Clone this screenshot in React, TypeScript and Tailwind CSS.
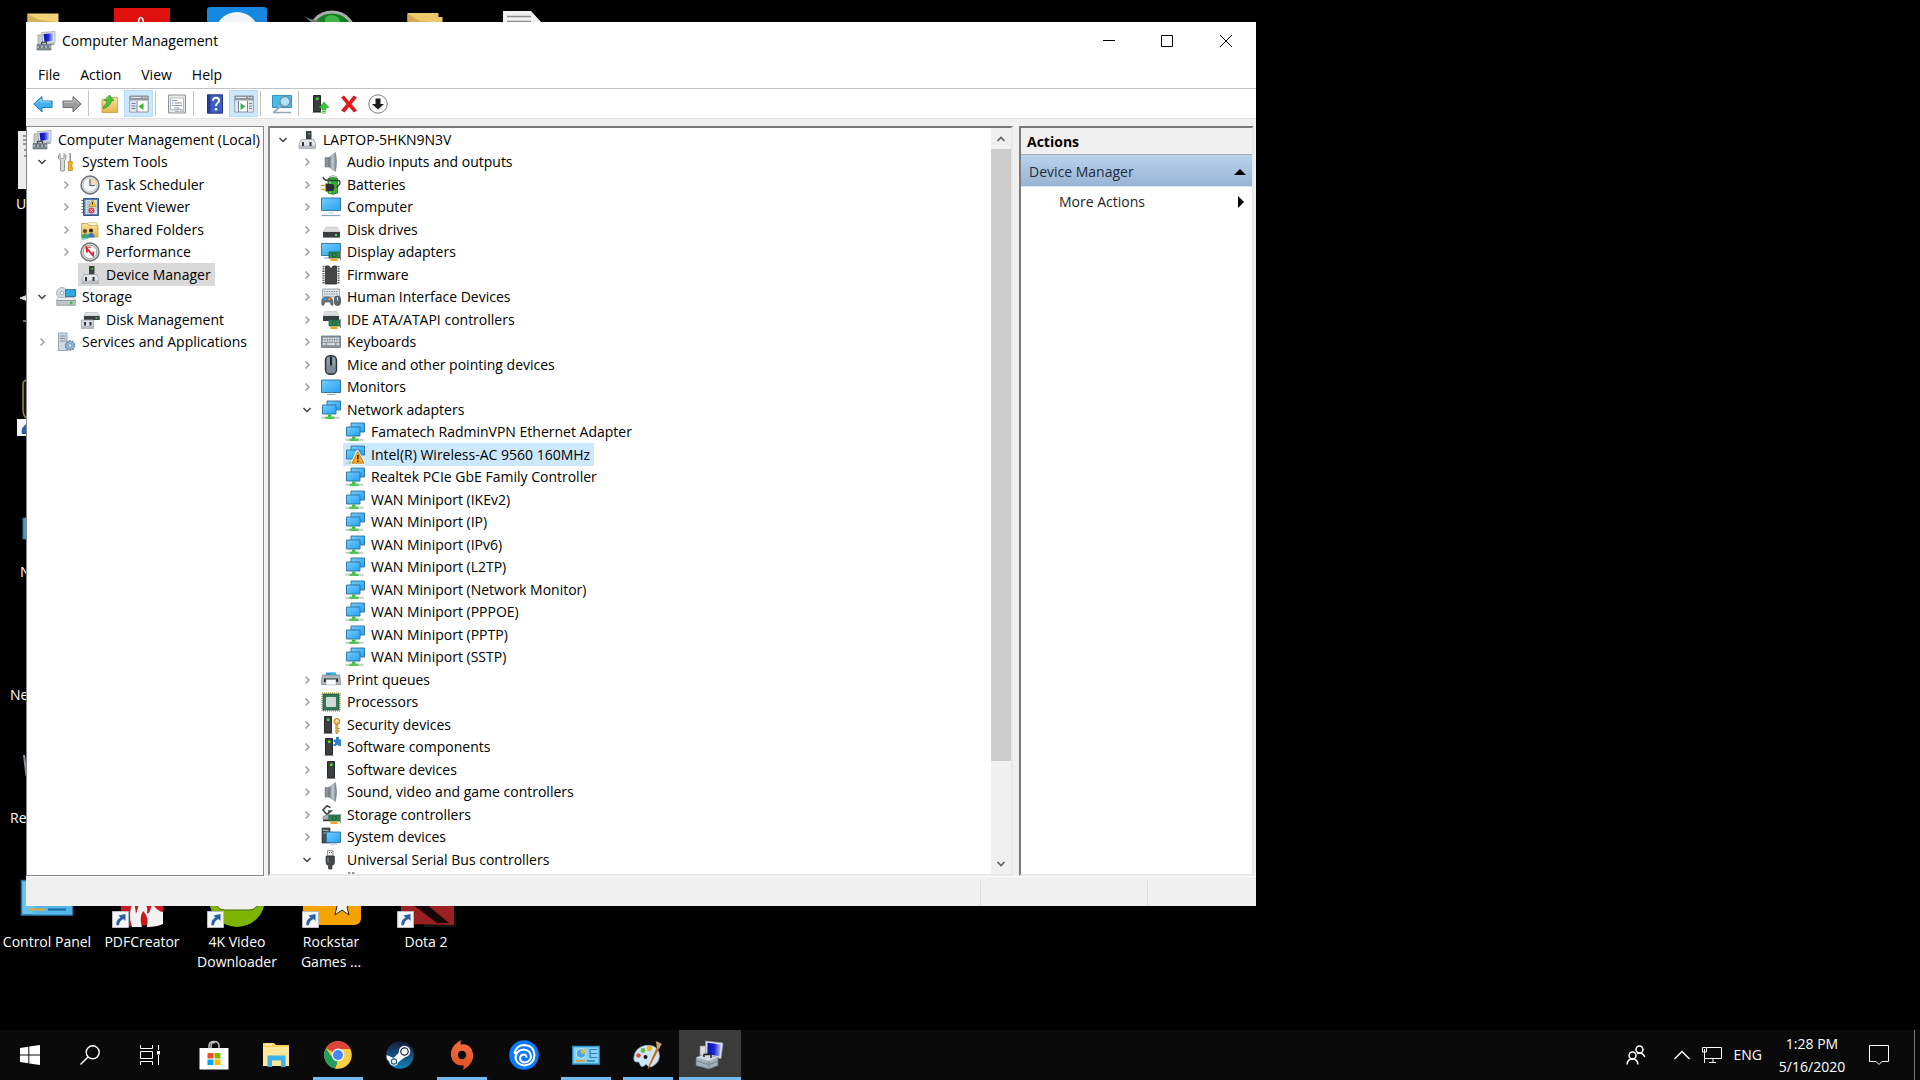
import React from 'react';
import clsx from 'clsx';

/* ---------- shared svg parts ---------- */

const Svg: React.FC<{ size?: string; box?: string; children: React.ReactNode }> = ({
  size = 'w-5 h-5',
  box = '0 0 20 20',
  children
}) => (
  <svg viewBox={box} className={clsx('shrink-0', size)} aria-hidden="true">
    {children}
  </svg>
);

const Gradients: React.FC = () => (
  <svg className="absolute w-0 h-0" aria-hidden="true">
    <defs>
      <linearGradient id="screen" x1="0" y1="0" x2="1" y2="1">
        <stop offset="0" stopColor="#74cdfb" />
        <stop offset="1" stopColor="#27a0f2" />
      </linearGradient>
      <linearGradient id="cone" x1="0" y1="0" x2="1" y2="0">
        <stop offset="0" stopColor="#6d7780" />
        <stop offset="0.5" stopColor="#c5cbd0" />
        <stop offset="1" stopColor="#747d85" />
      </linearGradient>
      <linearGradient id="folder" x1="0" y1="0" x2="0" y2="1">
        <stop offset="0" stopColor="#f9e29a" />
        <stop offset="1" stopColor="#e3b64c" />
      </linearGradient>
      <linearGradient id="navy" x1="0" y1="0" x2="1" y2="0">
        <stop offset="0" stopColor="#0a12a8" />
        <stop offset="0.5" stopColor="#1a24d8" />
        <stop offset="1" stopColor="#b9c8ff" />
      </linearGradient>
      <linearGradient id="steam" x1="0" y1="0" x2="0" y2="1">
        <stop offset="0" stopColor="#171a3c" />
        <stop offset="1" stopColor="#1383b8" />
      </linearGradient>
      <linearGradient id="origin" x1="0" y1="0" x2="0" y2="1">
        <stop offset="0" stopColor="#f3703f" />
        <stop offset="1" stopColor="#dd4f22" />
      </linearGradient>
    </defs>
  </svg>
);

const Card = () => (
  <g>
    <path d="M8 10h11v6H8z" fill="#2b8a52" stroke="#1c5b38" strokeWidth="0.8" />
    <path d="M19.5 9v9" stroke="#8a9096" />
    <path d="M11 11.5h4.5v3H11z" fill="#174b2e" />
    <path d="M12 12.5h2.5v1H12z" fill="#6fd08e" />
    <path d="M9.5 16.5h7V19h-7z" fill="#f2a71c" />
  </g>
);

const Tower: React.FC<{ x?: number }> = ({ x = 0 }) => (
  <g transform={`translate(${x} 0)`}>
    <path d="M3.500 1.500h7v16h-7z" fill="#3c3f42" stroke="#26282a" />
    <path d="M2.500 18.500h9" stroke="#8b8e91" />
    <rect x="6" y="3.500" width="2.500" height="2.500" fill="#3fe03f" />
  </g>
);

/* ---------- tree icons ---------- */

const ComputerManagementIcon: React.FC<{ size?: string }> = ({ size }) => (
  <Svg size={size}>
    <path d="M2 4h5v11H2z" fill="#c8ccd0" stroke="#8b9096" strokeWidth="0.700" />
    <path d="M5.500 1.500 19 .5v11l-12 1.500z" fill="#dfe2e6" stroke="#9a9fa6" strokeWidth="0.700" />
    <path d="m7.500 3 9.500-.8v7.600L8.500 11z" fill="url(#navy)" />
    <path d="M14 12h4l1 2h-5z" fill="#aab0b5" />
    <path d="M1 13.500h14V19H1z" fill="#7f8b93" stroke="#59646b" strokeWidth="0.600" />
    <path d="M5.500 13.300v-2h5v2" fill="none" stroke="#2f3538" />
    <path d="M1 16h14" stroke="#d7dcdf" />
    <path d="M4 15v2m4-2v2m4-2v2" stroke="#30373b" />
  </Svg>
);

const DeviceManagerIcon = () => (
  <Svg>
    <path d="M9 1h5.500v9H9z" fill="#3f4245" />
    <rect x="11.500" y="3" width="1.500" height="1.500" fill="#44df44" />
    <path d="M4 9.500h13L18.500 14v4.500H2V14z" fill="#e4e5ea" stroke="#a2a4ad" strokeWidth="0.800" />
    <path d="M2 15.500h16.500v3H2z" fill="#b9bbc4" />
    <path d="M5 12h2v4H5zm7.500 0h2v4h-2z" fill="#303236" />
  </Svg>
);

const ToolsIcon = () => (
  <Svg>
    <path
      d="M3 1.500v4l2 1.500 2-1.500v-4l2 2v3L7.500 9v9.500q-2 1.500-4 0V9L1.500 6.500v-3z"
      transform="translate(1 0)"
      fill="#d4d8db"
      stroke="#7b8287"
      strokeWidth="0.800"
    />
    <path d="M13.500 1h1.500v8h-1.500z" fill="#8d9398" />
    <path d="M12 10q2.300-2 4.500 0l-.6 3 .6 5q-2.200 1.800-4.500 0l.6-5z" fill="#f5b323" stroke="#b67b06" strokeWidth="0.700" />
  </Svg>
);

const ClockIcon = () => (
  <Svg>
    <circle cx="10" cy="10" r="9" fill="#d9dce0" stroke="#6c7075" strokeWidth="1.400" />
    <circle cx="10" cy="10" r="7" fill="#f3f6fa" stroke="#a8adb3" strokeWidth="0.600" />
    <path d="M10 10V3a7 7 0 0 1 7 7z" fill="#f7dfa8" />
    <path d="M10 4v6.500h5" fill="none" stroke="#3f6796" strokeWidth="1.200" />
  </Svg>
);

const EventIcon = () => (
  <Svg>
    <path d="M3.500 1.500h15v17h-15z" fill="#5b7fb4" stroke="#34588c" />
    <path d="M5.500 3h11.500v14H5.500z" fill="#cfdcec" />
    <path d="M7 5h3m-3 2.500h3M7 10h3m-3 2.500h2M7 15h2" stroke="#7d97ba" strokeWidth="0.800" />
    <path d="m12.500 3 3.800 6.500H8.800z" fill="#f8c81c" stroke="#a87f00" strokeWidth="0.500" />
    <path d="M12.500 5.200v2.500" stroke="#3b2f00" />
    <circle cx="11.500" cy="13.500" r="3" fill="#dd3a3f" />
    <path d="m10.300 12.300 2.400 2.400m0-2.400-2.400 2.400" stroke="#fff" strokeWidth="0.900" />
    <path d="M1.500 3.500h3m-3 3h3m-3 3h3m-3 3h3m-3 3h3" stroke="#55585c" strokeWidth="0.900" />
  </Svg>
);

const SharedIcon = () => (
  <Svg>
    <path d="M1.500 3.500h6l1 2h9.500V17h-16.500z" fill="url(#folder)" stroke="#b98f35" strokeWidth="0.700" />
    <path d="M9 2.500h8v3H9z" fill="#fff4cf" stroke="#caa552" strokeWidth="0.500" />
    <circle cx="5" cy="11" r="2" fill="#6a4326" />
    <circle cx="11" cy="10.500" r="2" fill="#2e2620" />
    <path d="M1.500 18.500q0-5 3.500-5t3.500 5z" fill="#3fa17c" />
    <path d="M7.800 17.500q0-4.500 3.400-4.500t3.300 4.500z" fill="#3a77b8" />
    <path d="M.8 19q4 1 7.500-1" stroke="#79c9a8" fill="none" />
  </Svg>
);

const PerformanceIcon = () => (
  <Svg>
    <circle cx="10" cy="10" r="9" fill="#d9dbdd" stroke="#6f7275" strokeWidth="1.400" />
    <circle cx="10" cy="10" r="6.800" fill="#fbfbfb" stroke="#8d9093" strokeWidth="0.800" />
    <path d="M7 10.500 6.500 6l6.500 7.500.5-4" fill="none" stroke="#d81f26" strokeWidth="1.800" />
    <path d="M6 5.200h5" stroke="#d81f26" />
  </Svg>
);

const StorageIcon = () => (
  <Svg>
    <circle cx="6" cy="6" r="5.500" fill="#d6dade" stroke="#989ea4" strokeWidth="0.700" />
    <circle cx="6" cy="6" r="1.700" fill="#fff" stroke="#8a9096" strokeWidth="0.700" />
    <path d="M9.500 2.500h10v7h-10z" fill="#2fa9e0" stroke="#16688f" strokeWidth="0.800" />
    <path d="M2 10.500h16l1.500 3h-19z" fill="#eceef0" stroke="#9da3a8" strokeWidth="0.600" />
    <path d="M.8 13.500h18.500v4.800H.8z" fill="#bfc5ca" stroke="#80868c" strokeWidth="0.700" />
    <path d="M14 14.500h2.500v2.800H14z" fill="#43bf3f" />
  </Svg>
);

const DiskManagementIcon = () => (
  <Svg>
    <path d="M5.500 2.500h12L19.500 6h-16z" fill="#e2e3e5" stroke="#a7a9ac" strokeWidth="0.500" />
    <path d="M4 6h15.700v4H4z" fill="#3a3d40" />
    <rect x="15.500" y="7.300" width="1.700" height="1.400" fill="#44df44" />
    <path d="M1.500 10h12v8.500h-12z" fill="#dddee4" stroke="#9d9fa8" strokeWidth="0.800" />
    <path d="M4 12h2v3.500H4zm5.500 0h2v3.500h-2z" fill="#303236" />
    <path d="M1.500 16h12v2.500h-12z" fill="#b9bbc4" />
  </Svg>
);

const ServicesIcon = () => (
  <Svg>
    <path d="M2.500 1h8.500v17.500H2.500z" fill="#cfd9e2" stroke="#8496a6" strokeWidth="0.800" />
    <path d="M4 4h5.500M4 6.500h5.500M4 9h5.500" stroke="#7b8ea0" />
    <path d="M1.500 18.500H12" stroke="#9aa7b2" />
    <circle cx="14" cy="13.500" r="4.500" fill="#8fb4d6" stroke="#5f88b0" strokeWidth="1.600" strokeDasharray="1.800 1" />
    <circle cx="14" cy="13.500" r="1.700" fill="#eef4f9" stroke="#5f88b0" strokeWidth="0.700" />
  </Svg>
);

const SpeakerIcon = () => (
  <Svg>
    <path d="M4 5.500h4v9.500H4z" fill="#8a939b" stroke="#626b72" strokeWidth="0.500" />
    <path d="M8 5.500 14.500.5q2 9.500 0 19L8 15z" fill="url(#cone)" stroke="#6d767e" strokeWidth="0.500" />
  </Svg>
);

const BatteryIcon = () => (
  <Svg>
    <path d="M8.500 1.500q3.500-2 7 0V4h-7z" fill="#dfe4e8" stroke="#8b9196" strokeWidth="0.600" />
    <path d="M7 3.500q5-2 9.500 0V18q-4.500 2.500-9.500 0z" fill="#35b233" stroke="#1c7420" strokeWidth="0.800" />
    <path d="M9 5v13" stroke="#94ee85" strokeWidth="1.300" />
    <path d="M2 2q1 3.500 5 3.500h10q3 0 1.500 4l-3 3" fill="none" stroke="#33373a" strokeWidth="1.300" />
    <path d="M4.500 8.500 12 9q3 3 0 7l-7.500.5z" fill="#2c2f32" />
    <path d="M0 10.500h4.500M0 14.500h4.500" stroke="#e0a624" strokeWidth="1.600" />
  </Svg>
);

const MonitorIcon: React.FC<{ small?: boolean }> = ({ small }) => (
  <Svg>
    <path
      d={small ? 'M.5 3h19v12.500H.5z' : 'M.5 1h19v12.500H.5z'}
      fill="url(#screen)"
      stroke="#286f9e"
      strokeWidth="0.900"
    />
    {small ? (
      <path d="M6 17.500h8" stroke="#8ba6bb" />
    ) : (
      <g>
        <path d="M7.500 15h5v1.500h-5z" fill="#c3d2de" />
        <path d="M.5 18.500h19" stroke="#8ba6bb" strokeWidth="1.200" />
      </g>
    )}
  </Svg>
);

const DiskIcon = () => (
  <Svg>
    <path d="M5 7h11l3 5H2z" fill="#dcdddf" stroke="#b5b7ba" strokeWidth="0.500" />
    <path d="M2 12h17v5.500H2z" fill="#3a3d3f" />
    <path d="M2 17.500h17" stroke="#85888a" strokeWidth="0.800" />
    <rect x="14" y="14" width="2" height="2" fill="#44df44" />
  </Svg>
);

const DisplayIcon = () => (
  <Svg>
    <path d="M.5 1.500h19v12H.5z" fill="url(#screen)" stroke="#286f9e" strokeWidth="0.900" />
    <path d="M3 16h6" stroke="#8ba6bb" />
    <Card />
  </Svg>
);

const FirmwareIcon = () => (
  <Svg>
    <path d="M2.500 1v18M17.500 1v18" stroke="#4a4a4a" strokeWidth="2" strokeDasharray="1.300 1" />
    <path d="M4.500 1h3.500l1 2h2l1-2h3.500v18h-11z" fill="#464646" stroke="#282828" strokeWidth="0.800" />
  </Svg>
);

const HidIcon = () => (
  <Svg>
    <path d="M1.500 2h17v8h-17z" fill="#dde2e6" stroke="#8e979e" strokeWidth="0.800" />
    <path d="M3 4.500h14M3 7h14" stroke="#8e979e" strokeDasharray="1.400 1" />
    <path d="M1 18q-1.500-8 4-8h3q4.500 0 4 8-2 1.500-3-3H4q-1 4.500-3 3z" fill="#67747e" stroke="#454f57" strokeWidth="0.600" />
    <circle cx="4" cy="12" r="1.300" fill="#3a9be0" />
    <circle cx="8.500" cy="12" r="1.300" fill="#f08a2c" />
    <rect x="13.500" y="9" width="6" height="9.500" rx="3" fill="#5d6a75" stroke="#333c43" strokeWidth="0.700" />
    <path d="M16.500 10v3.500" stroke="#dfe5ea" />
  </Svg>
);

const IdeIcon = () => (
  <Svg>
    <path d="M4 1.500h12L18 6H2z" fill="#dcdddf" stroke="#b5b7ba" strokeWidth="0.500" />
    <path d="M2 6h16v5H2z" fill="#3a3d3f" />
    <Card />
  </Svg>
);

const KeyboardIcon = () => (
  <Svg>
    <path d="M.5 4h19v11.500H.5z" fill="#8d979f" stroke="#68727a" strokeWidth="0.800" />
    <path d="M2 6.500h16M2 9h16" stroke="#f1f4f6" strokeWidth="1.300" strokeDasharray="1.600 0.800" />
    <path d="M2 12h2.500m1.500 0h8m1.500 0H18" stroke="#f1f4f6" strokeWidth="1.300" />
  </Svg>
);

const MouseIcon = () => (
  <Svg>
    <rect x="4.500" y=".8" width="11" height="18.500" rx="4.500" fill="#7e8c9a" stroke="#2d3339" strokeWidth="1.400" />
    <path d="M7 2.500v8M13 2.500v8" stroke="#b9c4ce" strokeWidth="0.700" />
    <path d="M10 2v8.500" stroke="#22272c" strokeWidth="2" />
  </Svg>
);

const NetworkIcon: React.FC<{ warning?: boolean }> = ({ warning }) => (
  <Svg>
    <path d="M6 1h13.500v9H6z" fill="url(#screen)" stroke="#286f9e" strokeWidth="0.900" />
    <path d="M1.500 5h13.500v9H1.500z" fill="url(#screen)" stroke="#286f9e" strokeWidth="0.900" />
    <path d="M7 14.500h3.500V17H7z" fill="#3fb342" />
    <path d="M.5 17.800h18" stroke="#c7cbce" strokeWidth="2" />
    <path d="M4.500 17.800h9" stroke="#4fc852" strokeWidth="2.400" />
    {warning && (
      <g>
        <path d="M12.500 6 19.500 18.700h-13z" fill="#f6a821" stroke="#fff" strokeWidth="2.200" strokeLinejoin="round" />
        <path d="M12.800 6.500 19 18.200H6.800z" fill="#f6a821" stroke="#b47310" strokeWidth="0.800" strokeLinejoin="round" />
        <path d="M12.900 10v4.200m0 1.200v1.600" stroke="#3a2500" strokeWidth="1.600" />
      </g>
    )}
  </Svg>
);

const PrinterIcon = () => (
  <Svg>
    <path d="M5.500 2.500h9L16 6H4z" fill="#2499e6" />
    <path d="M10 2.500h4.500L16 6h-6z" fill="#35c4c9" />
    <path d="M1.500 5h17l1 5.500v4H.5v-4z" fill="#aeb4b9" stroke="#7b8187" strokeWidth="0.700" />
    <path d="M3 8.500h14V12H3z" fill="#26292b" />
    <path d="M5 9.500h10V15H5z" fill="#f7f8f8" stroke="#9b9fa2" strokeWidth="0.500" />
  </Svg>
);

const ProcessorIcon = () => (
  <Svg>
    <path d="M1 1h18v18H1z" fill="none" stroke="#c79f3c" strokeWidth="1.600" strokeDasharray="1 1" />
    <path d="M2 2h16v16H2z" fill="#34765a" stroke="#1f5540" strokeWidth="0.800" />
    <path d="M5.500 5.500h9v9h-9z" fill="#d5d8d9" stroke="#eef0f0" strokeWidth="0.700" />
  </Svg>
);

const SecurityIcon = () => (
  <Svg>
    <Tower />
    <circle cx="15.800" cy="6.500" r="3" fill="#f0c15a" stroke="#a9741a" strokeWidth="0.900" />
    <circle cx="15.800" cy="5.500" r="0.900" fill="#fff" />
    <path d="M14.800 9.500h2V18l-1 1-1-1z" fill="#e9b64a" stroke="#a9741a" strokeWidth="0.600" />
    <path d="M17 13.500h1.500M17 16h1.500" stroke="#a9741a" />
  </Svg>
);

const SoftwareComponentsIcon = () => (
  <Svg>
    <Tower x={1} />
    <path d="M12.500 2.500H15V0h3v2.500h2V9h-7.500V7h1.500V5h-1.500z" fill="#2a83d6" />
    <circle cx="16.300" cy="9" r="1.200" fill="#fff" />
  </Svg>
);

const SoftwareDevicesIcon = () => (
  <Svg>
    <Tower x={3} />
  </Svg>
);

const StorageControllersIcon = () => (
  <Svg>
    <path d="M9.500 2.500 6 .8 2 5l4 4.500 4-3.500H7" fill="none" stroke="#484c50" strokeWidth="1.700" />
    <path d="M2 11.500 8 9v5.500H2z" fill="#a9aeb2" stroke="#6f7579" strokeWidth="0.600" />
    <path d="M2 15.500h6" stroke="#3a3d3f" strokeWidth="1.500" />
    <Card />
  </Svg>
);

const SystemDevicesIcon = () => (
  <Svg>
    <path d="M1 1h8v15H1z" fill="#4a4e52" stroke="#2c2f32" strokeWidth="0.700" />
    <path d="M2.500 3.500h5M2.500 6h3" stroke="#aeb3b7" />
    <rect x="2" y="2.500" width="1.500" height="1.500" fill="#44df44" />
    <path d="M5.500 5h14v10.500h-14z" fill="url(#screen)" stroke="#286f9e" strokeWidth="0.900" />
    <path d="M9 17h7" stroke="#8ba6bb" />
  </Svg>
);

const UsbIcon = () => (
  <Svg>
    <path d="M6.500 .5h5.500V6H6.500z" fill="#e8eaeb" stroke="#7c8185" strokeWidth="0.800" />
    <path d="M8 2.500h1M10 2.500h1" stroke="#5a5e61" />
    <path d="M5 6h8.500v6q0 3-2.500 3.500V19H7.500v-3.500Q5 15 5 12z" fill="#44474a" stroke="#2d2f31" strokeWidth="0.600" />
    <path d="M7 7.500v5" stroke="#8b9094" />
  </Svg>
);

/* ---------- tree ---------- */

interface Node {
  label: string;
  icon: React.ReactNode;
  level: number;
  state?: 'open' | 'closed';
  mark?: 'focus' | 'select';
}

const consoleTree: Node[] = [
  { label: 'Computer Management (Local)', icon: <ComputerManagementIcon />, level: 0 },
  { label: 'System Tools', icon: <ToolsIcon />, level: 1, state: 'open' },
  { label: 'Task Scheduler', icon: <ClockIcon />, level: 2, state: 'closed' },
  { label: 'Event Viewer', icon: <EventIcon />, level: 2, state: 'closed' },
  { label: 'Shared Folders', icon: <SharedIcon />, level: 2, state: 'closed' },
  { label: 'Performance', icon: <PerformanceIcon />, level: 2, state: 'closed' },
  { label: 'Device Manager', icon: <DeviceManagerIcon />, level: 2, mark: 'focus' },
  { label: 'Storage', icon: <StorageIcon />, level: 1, state: 'open' },
  { label: 'Disk Management', icon: <DiskManagementIcon />, level: 2 },
  { label: 'Services and Applications', icon: <ServicesIcon />, level: 1, state: 'closed' }
];

const deviceTree: Node[] = [
  { label: 'LAPTOP-5HKN9N3V', icon: <DeviceManagerIcon />, level: 1, state: 'open' },
  { label: 'Audio inputs and outputs', icon: <SpeakerIcon />, level: 2, state: 'closed' },
  { label: 'Batteries', icon: <BatteryIcon />, level: 2, state: 'closed' },
  { label: 'Computer', icon: <MonitorIcon />, level: 2, state: 'closed' },
  { label: 'Disk drives', icon: <DiskIcon />, level: 2, state: 'closed' },
  { label: 'Display adapters', icon: <DisplayIcon />, level: 2, state: 'closed' },
  { label: 'Firmware', icon: <FirmwareIcon />, level: 2, state: 'closed' },
  { label: 'Human Interface Devices', icon: <HidIcon />, level: 2, state: 'closed' },
  { label: 'IDE ATA/ATAPI controllers', icon: <IdeIcon />, level: 2, state: 'closed' },
  { label: 'Keyboards', icon: <KeyboardIcon />, level: 2, state: 'closed' },
  { label: 'Mice and other pointing devices', icon: <MouseIcon />, level: 2, state: 'closed' },
  { label: 'Monitors', icon: <MonitorIcon small />, level: 2, state: 'closed' },
  { label: 'Network adapters', icon: <NetworkIcon />, level: 2, state: 'open' },
  { label: 'Famatech RadminVPN Ethernet Adapter', icon: <NetworkIcon />, level: 3 },
  { label: 'Intel(R) Wireless-AC 9560 160MHz', icon: <NetworkIcon warning />, level: 3, mark: 'select' },
  { label: 'Realtek PCIe GbE Family Controller', icon: <NetworkIcon />, level: 3 },
  { label: 'WAN Miniport (IKEv2)', icon: <NetworkIcon />, level: 3 },
  { label: 'WAN Miniport (IP)', icon: <NetworkIcon />, level: 3 },
  { label: 'WAN Miniport (IPv6)', icon: <NetworkIcon />, level: 3 },
  { label: 'WAN Miniport (L2TP)', icon: <NetworkIcon />, level: 3 },
  { label: 'WAN Miniport (Network Monitor)', icon: <NetworkIcon />, level: 3 },
  { label: 'WAN Miniport (PPPOE)', icon: <NetworkIcon />, level: 3 },
  { label: 'WAN Miniport (PPTP)', icon: <NetworkIcon />, level: 3 },
  { label: 'WAN Miniport (SSTP)', icon: <NetworkIcon />, level: 3 },
  { label: 'Print queues', icon: <PrinterIcon />, level: 2, state: 'closed' },
  { label: 'Processors', icon: <ProcessorIcon />, level: 2, state: 'closed' },
  { label: 'Security devices', icon: <SecurityIcon />, level: 2, state: 'closed' },
  { label: 'Software components', icon: <SoftwareComponentsIcon />, level: 2, state: 'closed' },
  { label: 'Software devices', icon: <SoftwareDevicesIcon />, level: 2, state: 'closed' },
  { label: 'Sound, video and game controllers', icon: <SpeakerIcon />, level: 2, state: 'closed' },
  { label: 'Storage controllers', icon: <StorageControllersIcon />, level: 2, state: 'closed' },
  { label: 'System devices', icon: <SystemDevicesIcon />, level: 2, state: 'closed' },
  { label: 'Universal Serial Bus controllers', icon: <UsbIcon />, level: 2, state: 'open' }
];

const indent = ['', '', 'pl-6', 'pl-12'];

const Chevron: React.FC<{ open?: boolean }> = ({ open }) => (
  <Svg size="w-3 h-3" box="0 0 12 12">
    <path
      d={open ? 'M2.500 4 6 7.500 9.500 4' : 'M4.500 2.500 8 6 4.500 9.500'}
      fill="none"
      stroke={open ? '#404040' : '#a0a0a0'}
      strokeWidth="1.500"
    />
  </Svg>
);

const Tree: React.FC<{ nodes: Node[]; name: string }> = ({ nodes, name }) => (
  <ul aria-label={name}>
    {nodes.map((node) => (
      <li key={node.label} className={clsx('flex h-[22px] odd:h-[23px]', indent[node.level])}>
        {node.level > 0 && (
          <span className="w-6 shrink-0 flex items-center justify-center">
            {node.state && (
              <button type="button" aria-label={`Toggle ${node.label}`}>
                <Chevron open={node.state === 'open'} />
              </button>
            )}
          </span>
        )}
        <button
          type="button"
          className={clsx(
            'flex items-center gap-1.5 pl-0.5 pr-1 whitespace-nowrap',
            node.mark === 'focus' && 'bg-[#d9d9d9]',
            node.mark === 'select' && 'bg-[#cce8ff]'
          )}
        >
          {node.icon}
          {node.label}
        </button>
      </li>
    ))}
  </ul>
);

/* ---------- toolbar ---------- */

const ToolButton: React.FC<{ label: string; pressed?: boolean; children: React.ReactNode }> = ({
  label,
  pressed,
  children
}) => (
  <button
    type="button"
    aria-label={label}
    className={clsx(
      'w-[29px] h-[27px] flex items-center justify-center',
      pressed && 'bg-[#cce8ff] border border-[#b5dcfb]'
    )}
  >
    {children}
  </button>
);

const Separator = () => <span className="w-px h-[25px] ml-0.5 mr-1.5 bg-[#c3c3c3]" />;

const PaneIcon: React.FC<{ right?: boolean }> = ({ right }) => (
  <Svg>
    <path d="M.8 2h18.400v16H.8z" fill="#fff" stroke="#8b8f98" />
    <path d="M.8 2h18.400v4.500H.8z" fill="#8f949f" />
    <path d="M2 3.500h10M14 3.500h1.500M16.500 3.500H18" stroke="#e4e6ea" />
    <path d={right ? 'M1.500 7h3v10.500h-3zM14.500 7h4v10.500h-4z' : 'M1.500 7h6v10.500h-6z'} fill="#dfe3ea" />
    <path
      d={right ? 'M15 9.500h3m-3 2.500h3m-3 2.500h3M13.500 7v11M4.500 7v11' : 'M2.500 9.500h4m-4 2.500h4m-4 2.500h4M8 7v11'}
      stroke="#7083a5"
    />
    <path d={right ? 'M6.500 9v7l5-3.500z' : 'M14.500 9v7l-5-3.500z'} fill="#3cb43a" />
  </Svg>
);

const Toolbar = () => (
  <div className="flex items-center h-[30px] pl-0.5 bg-white border-b border-[#e3e3e3]">
    <ToolButton label="Back">
      <Svg>
        <path d="M.8 10 9 2.500V7h10v6.500H9V18z" fill="#3fb0ee" stroke="#1f77b8" />
        <path d="M3 9.500 8 5v3h10" fill="none" stroke="#a6e0fb" />
      </Svg>
    </ToolButton>
    <ToolButton label="Forward">
      <Svg>
        <path d="M19.200 10 11 2.500V7H1v6.500h10V18z" fill="#9b9b9b" stroke="#6f6f6f" />
        <path d="M2 8.200h10v-3L17 10" fill="none" stroke="#c9c9c9" />
      </Svg>
    </ToolButton>
    <Separator />
    <ToolButton label="Up one level">
      <Svg>
        <path d="M2 5.500h7l1-2h7.500V18.500H2z" fill="url(#folder)" stroke="#c79b3d" strokeWidth="0.800" />
        <path d="M3.500 12.500q3-1 3.500-6H4l5.500-5.500 4.500 5.500h-2.500q-1 6-8 8z" fill="#50c040" stroke="#2c8c25" strokeWidth="0.700" />
      </Svg>
    </ToolButton>
    <ToolButton label="Show/Hide Console Tree" pressed>
      <PaneIcon />
    </ToolButton>
    <Separator />
    <ToolButton label="Properties">
      <Svg>
        <path d="M1.500 1h17v18h-17z" fill="#e6e8ea" stroke="#8f9499" />
        <path d="M3.500 4h13v11.500h-13z" fill="#fff" stroke="#a5aaaf" strokeWidth="0.800" />
        <path d="M5 6.500h5M7.500 9h7.500M7.500 11.500h7.500M7.500 14h5" stroke="#8b9299" />
        <path d="M5 9h1.500M5 11.500h1.500" stroke="#3c86c9" />
        <path d="M8 17.300h4m1 0h4" stroke="#9fa4a9" />
      </Svg>
    </ToolButton>
    <Separator />
    <ToolButton label="Help">
      <Svg>
        <path d="M2.500.8h15v18.400h-15z" fill="#3c5fc4" stroke="#22367e" />
        <path d="M3 1h2.500v18H3z" fill="#263f96" />
        <path d="M8 6.800q0-3 3-3t3 2.800q0 1.600-1.600 2.700-1.400 1-1.400 2.700" fill="none" stroke="#fff" strokeWidth="1.900" />
        <circle cx="11" cy="15.300" r="1.300" fill="#fff" />
      </Svg>
    </ToolButton>
    <ToolButton label="Show/Hide Action Pane" pressed>
      <PaneIcon right />
    </ToolButton>
    <Separator />
    <ToolButton label="Scan for hardware changes">
      <Svg>
        <path d="M.5 1.500h19v12H.5z" fill="#48bbe8" stroke="#2a86b5" strokeWidth="0.900" />
        <path d="M1 18.500h18" stroke="#8ba6bb" strokeWidth="1.500" />
        <path d="m9.500 11.500-7 6" stroke="#9aaab6" strokeWidth="2" strokeLinecap="round" />
        <circle cx="13" cy="7.500" r="5" fill="#b4e3f8" stroke="#6d8fa6" strokeWidth="1.300" />
      </Svg>
    </ToolButton>
    <Separator />
    <ToolButton label="Update driver">
      <Svg>
        <Tower />
        <path d="m14 8 5 5.500h-3V16h-4v-2.500H9z" fill="#3ac73a" stroke="#1f9420" strokeWidth="0.500" />
        <path d="M12 17.500h4m-4 1.500h4" stroke="#3ac73a" />
      </Svg>
    </ToolButton>
    <ToolButton label="Uninstall device">
      <Svg>
        <path d="M2 3.500 5 1.500 10 7.500 14.500 1.500 18 3.500 12.500 10 18 16.500 15 18.500 10 13 5.500 18.500 2 16.500 7.500 10z" fill="#e01b1e" />
      </Svg>
    </ToolButton>
    <ToolButton label="Disable device">
      <Svg>
        <circle cx="10" cy="10" r="9.200" fill="#fdfdfd" stroke="#7d7d7d" />
        <path d="M7.500 4.500h5v5.500H16l-6 5.500L4 10h3.500z" fill="#1c1c1c" />
      </Svg>
    </ToolButton>
  </div>
);

/* ---------- window ---------- */

const ManagementWindow = () => (
  <section
    aria-label="Computer Management"
    className="absolute top-[22px] left-[26px] right-[664px] bg-[#f0f0f0] text-black"
  >
    <header className="flex items-center h-[38px] bg-white">
      <h1 className="flex items-center gap-1.5 grow pl-2.5">
        <ComputerManagementIcon />
        Computer Management
      </h1>
      <button type="button" aria-label="Minimize" className="w-[58px] h-full flex items-center justify-center">
        <Svg size="w-3 h-3" box="0 0 12 12">
          <path d="M0 5.500h12" stroke="#000" />
        </Svg>
      </button>
      <button type="button" aria-label="Maximize" className="w-[58px] h-full flex items-center justify-center">
        <Svg size="w-3 h-3" box="0 0 12 12">
          <path d="M.5.5h11v11H.5z" fill="none" stroke="#000" />
        </Svg>
      </button>
      <button type="button" aria-label="Close" className="w-[60px] h-full flex items-center justify-center">
        <Svg size="w-3 h-3" box="0 0 12 12">
          <path d="m0 0 12 12M12 0 0 12" stroke="#000" />
        </Svg>
      </button>
    </header>

    <nav className="flex items-center gap-5 h-[29px] pt-0.5 pl-3 bg-white border-b border-[#bfc2c7]">
      <button type="button">File</button>
      <button type="button">Action</button>
      <button type="button">View</button>
      <button type="button">Help</button>
    </nav>

    <Toolbar />

    <div className="flex gap-1 pt-[7px] pr-0.5">
      <div className="w-[238px] shrink-0 bg-white border border-[#828790] pt-px pl-[3px]">
        <Tree nodes={consoleTree} name="Console tree" />
      </div>

      <div className="grow flex bg-white border-2 border-t-[#7a7a7a] border-l-[#8a8a8a] border-r-[#e8e8e8] border-b-[#e8e8e8]">
        <div className="grow pl-px">
          <Tree nodes={deviceTree} name="Devices" />
          {/* top edge of the next device, cut off by the pane */}
          <Svg size="w-6 h-[3px] ml-[72px]" box="0 0 24 3">
            <path d="M5 2h2.500M9 2h2.500" stroke="#777" strokeWidth="1.500" />
          </Svg>
        </div>
        <div className="w-5 shrink-0 flex flex-col bg-[#f0f0f0]">
          <button type="button" aria-label="Scroll up" className="h-[21px] flex items-center justify-center">
            <Svg size="w-3 h-3" box="0 0 12 12">
              <path d="M2.500 8 6 4.500 9.500 8" fill="none" stroke="#606060" strokeWidth="1.700" />
            </Svg>
          </button>
          <div className="grow-[87] bg-[#cdcdcd]" />
          <div className="grow-[13]" />
          <button type="button" aria-label="Scroll down" className="h-[21px] flex items-center justify-center">
            <Svg size="w-3 h-3" box="0 0 12 12">
              <path d="M2.500 4 6 7.500 9.500 4" fill="none" stroke="#606060" strokeWidth="1.700" />
            </Svg>
          </button>
        </div>
      </div>

      <aside className="w-[235px] shrink-0 ml-0.5 bg-white border-2 border-t-[#7a7a7a] border-l-[#7a7a7a] border-r-[#e8e8e8] border-b-[#e8e8e8]">
        <h2 className="h-[27px] flex items-center pt-0.5 pl-1.5 font-bold bg-[#f0f0f0] border-b border-[#a9a9a9]">
          Actions
        </h2>
        <button
          type="button"
          className="w-full h-8 flex items-center justify-between pt-0.5 pl-2 pr-1.5 bg-linear-to-b from-[#b9d3ec] to-[#99b4d3] border-b border-[#dfe9f3] text-[#1e2a3c]"
        >
          Device Manager
          <Svg size="w-3 h-1.5" box="0 0 12 6">
            <path d="M6 0 12 6H0z" />
          </Svg>
        </button>
        <button type="button" className="w-full h-[30px] flex items-center justify-between pl-[38px] pr-2 text-[#1e1e1e]">
          More Actions
          <Svg size="w-1.5 h-3" box="0 0 6 12">
            <path d="M0 0 6 6 0 12z" />
          </Svg>
        </button>
      </aside>
    </div>

    <footer className="flex justify-end h-[30px] pt-1 border-t border-white">
      <span className="w-[167px] border-l border-[#dcdcdc]" />
      <span className="w-[109px] border-l border-[#dcdcdc]" />
    </footer>
  </section>
);

/* ---------- desktop ---------- */

const Shortcut: React.FC<{ className: string }> = ({ className }) => (
  <Svg size={clsx('absolute w-[17px] h-[17px]', className)} box="0 0 17 17">
    <path d="M.5.5h16v16H.5z" fill="#f4f5f6" stroke="#b9bcc0" />
    <path d="M4.500 14.500Q3.500 9 8.500 6.500L6.500 4.500 13.500 3v7l-2-2Q7.500 9.500 7 14z" fill="#2c5fa3" />
  </Svg>
);

const DesktopLabel: React.FC<{ className: string; children: React.ReactNode }> = ({ className, children }) => (
  <span className={clsx('absolute w-[94px] text-center leading-5 text-white', className)}>{children}</span>
);

const Desktop = () => (
  <>
    {/* tops of the first row of icons */}
    <Svg size="absolute top-0 left-0 w-[560px] h-6" box="0 0 560 24">
      <path d="M27.500 13.500h31V24h-31z" fill="#f0d27a" />
      <path d="m27.500 14 12 6 19 2v2h-31z" fill="#d5b15a" />
      <path d="M114 8h56v16h-56z" fill="#e0100f" />
      <path d="M138.500 24q0-7 2.500-6.500t2.500 6.500" fill="none" stroke="#fff" strokeWidth="1.500" />
      <path d="M210 7h54q3 0 3 3v14h-60V10q0-3 3-3z" fill="#1587de" />
      <circle cx="237" cy="34" r="22" fill="#f2f5f8" />
      <circle cx="332" cy="35" r="23" fill="#157c23" stroke="#a9adab" strokeWidth="3" />
      <path d="M303 15q7 6 18 5l-8 4z" fill="#6f7472" />
      <path d="M326 24q-4-8 6-9 9 1 8 9z" fill="#3db548" />
      <path d="M407.500 13h31v4h4v7h-35z" fill="#ecc96d" />
      <path d="m407.500 14 12 7 22 2v1h-34z" fill="#cfa84f" />
      <path d="M503 11h28l10 11v2h-38z" fill="#f1f1f1" />
      <path d="M507 16.500h24M507 21.500h24" stroke="#8b8b8b" strokeWidth="1.600" />
    </Svg>

    {/* slivers left of the window */}
    <Svg size="absolute top-[130px] left-4 w-3 h-16" box="0 0 12 64">
      <path d="M2 1h10v58H2z" fill="#ececec" />
      <path d="M7 6h5M7 10h5M7 14h5M8 20h4M8 26h4" stroke="#7b7b7b" strokeWidth="1.500" />
    </Svg>
    <span className="absolute top-[194px] left-4 leading-5">U</span>
    <Svg size="absolute top-[290px] left-4 w-3 h-10" box="0 0 12 40">
      <path d="m4 8 8-3v6zM7 31h5" fill="#ddd" stroke="#ddd" />
    </Svg>
    <Svg size="absolute top-[378px] left-4 w-3 h-[58px]" box="0 0 12 58">
      <path d="M12 2Q7 2 7 6v26q0 6 5 10" fill="#151515" stroke="#a08a4f" strokeWidth="1.500" />
      <path d="M1 41h11v17H1z" fill="#f4f5f6" />
      <path d="M6 56q-2-7 6-11v11z" fill="#2c5fa3" />
    </Svg>
    <Svg size="absolute top-[517px] left-[22px] w-1.5 h-[23px]" box="0 0 6 23">
      <path d="M1 1h5v21H1z" fill="#3a9fdc" stroke="#5c6a74" />
    </Svg>
    <span className="absolute top-[562px] left-5 leading-5">N</span>
    <span className="absolute top-[685px] left-2.5 leading-5">Ne</span>
    <Svg size="absolute top-[754px] left-5 w-1.5 h-[38px]" box="0 0 6 38">
      <path d="M4 1 6.500 22" stroke="#8f9498" strokeWidth="2" />
    </Svg>
    <span className="absolute top-[808px] left-2.5 leading-5">Re</span>

    {/* bottom row of icons, partly under the window */}
    <Svg size="absolute top-[878px] left-0 w-[480px] h-[52px]" box="0 0 480 52">
      <path d="M21.500 2.500h51v34.500h-51z" fill="#6cc3ee" stroke="#2379ae" strokeWidth="1.500" />
      <path d="m32 37 14-34h26v34z" fill="#46ace4" opacity="0.600" />
      <path d="M29 31.500h17" stroke="#e8a33a" strokeWidth="2" />
      <path d="M48 31.500h18" stroke="#1468a6" strokeWidth="2" />
      <path d="M121 10h42v36l-42 3z" fill="#c9191f" />
      <path d="M132 49q-5-14 2-27l2 14 5-16q8 8 6 15 2 3 5-9 8 9 11 8v12q-6 3-16 3 2-11-4-16-4 7-1 16z" fill="#f2f2f2" />
      <circle cx="237" cy="21" r="28" fill="#7cb305" />
      <path d="M216 22h42q0 10-9 10h-24q-9 0-9-10z" fill="#eef0ea" stroke="#4a6b08" />
      <path d="M229 24h18v4h-18z" fill="#7cb305" />
      <path d="M303 5h58v35q0 7-7 7h-51z" fill="#f5a300" />
      <path d="m342 12 3 11h9l-7 6 2 8-7-5-7 5 2-9-4-4-2-3h7z" fill="#f5f5f5" stroke="#222" />
      <path d="M401 8l53-3v42l-53-1z" fill="#9a2022" />
      <path d="m413 15 36 30h-12l-25-19zM420 5h25l-3 20-9-4z" fill="#160607" />
      <path d="M424 48h31v-14" fill="none" stroke="#2a2a2a" />
    </Svg>
    <Shortcut className="top-[911px] left-[112px]" />
    <Shortcut className="top-[911px] left-[207px]" />
    <Shortcut className="top-[911px] left-[302px]" />
    <Shortcut className="top-[911px] left-[397px]" />
    <DesktopLabel className="top-[932px] left-0">Control Panel</DesktopLabel>
    <DesktopLabel className="top-[932px] left-[95px]">PDFCreator</DesktopLabel>
    <DesktopLabel className="top-[932px] left-[190px]">4K Video Downloader</DesktopLabel>
    <DesktopLabel className="top-[932px] left-[284px]">
      Rockstar
      <br />
      Games ...
    </DesktopLabel>
    <DesktopLabel className="top-[932px] left-[379px]">Dota 2</DesktopLabel>
  </>
);

/* ---------- taskbar ---------- */

const TaskApp: React.FC<{ label: string; running?: boolean; active?: boolean; children: React.ReactNode }> = ({
  label,
  running,
  active,
  children
}) => (
  <button
    type="button"
    aria-label={label}
    className={clsx('relative w-[62px] h-full flex items-center justify-center', active && 'bg-[#3b3b3b]')}
  >
    {children}
    {(running || active) && (
      <span className={clsx('absolute bottom-0 h-[3px] bg-[#76b9ed]', active ? 'inset-x-0' : 'inset-x-1.5')} />
    )}
  </button>
);

const Taskbar = () => (
  <footer className="flex h-[50px] bg-[#0a0a0a] text-white">
    <button type="button" aria-label="Start" className="w-15 flex items-center justify-center">
      <Svg>
        <path d="M0 3 8.300 1.800V9.500H0zM9.300 1.600 20 0v9.500H9.300zM0 10.500h8.300v7.700L0 17zM9.300 10.500H20V20L9.300 18.400z" fill="#fff" />
      </Svg>
    </button>
    <button type="button" aria-label="Search" className="w-15 flex items-center justify-center">
      <Svg>
        <circle cx="12.700" cy="7.300" r="6.500" fill="none" stroke="#fff" strokeWidth="1.400" />
        <path d="M8 12 .5 19.500" stroke="#fff" strokeWidth="1.400" />
      </Svg>
    </button>
    <button type="button" aria-label="Task View" className="w-15 mr-[3px] flex items-center justify-center">
      <Svg>
        <path d="M.5 0v3.500h12V0M.5 20v-3.500h12V20M.5 6.500h12v7H.5zM18.500 0v5M18.500 10v10" fill="none" stroke="#fff" />
        <path d="M17 6h3v3.500h-3z" fill="#fff" />
      </Svg>
    </button>

    <TaskApp label="Microsoft Store">
      <Svg size="w-[30px] h-[30px]" box="0 0 30 30">
        <path d="M10 9V6q0-4.500 5-4.500T20 6v3M12 9V6q0-4 4.500-3.500" fill="none" stroke="#b9b9b9" strokeWidth="1.600" />
        <path d="M.5 8h29v21.500H.5z" fill="#fff" />
        <path d="M8.500 13h6v5.500h-6z" fill="#f25022" />
        <path d="M15.500 13h6v5.500h-6z" fill="#7fba00" />
        <path d="M8.500 19.500h6V25h-6z" fill="#00a4ef" />
        <path d="M15.500 19.500h6V25h-6z" fill="#ffb900" />
      </Svg>
    </TaskApp>
    <TaskApp label="File Explorer">
      <Svg size="w-7 h-7" box="0 0 28 28">
        <path d="M1 2h11l2 2h13v21H1z" fill="#fbd35a" />
        <path d="M1 6h26v19H1z" fill="#ffe89c" />
        <path d="M3 3.500h7" stroke="#fff6d8" strokeWidth="1.500" />
        <path d="M5.500 26V14.500h18V26H19v-6.500h-9V26z" fill="#3db4e7" />
      </Svg>
    </TaskApp>
    <TaskApp label="Google Chrome" running>
      <Svg size="w-7 h-7" box="0 0 28 28">
        <circle cx="14" cy="14" r="13.800" fill="#fccd3f" />
        <path d="M14 14 2 7.200A13.800 13.800 0 0 1 26.100 7.500L27 8H14z" fill="#db4437" />
        <path d="M2 7.200 8.700 17 14 20l-2.600 7.600A13.800 13.800 0 0 1 2 7.200z" fill="#1fa15d" />
        <path d="m14 20 5.200-3-5.200 10.800-2.600-.2z" fill="#fccd3f" />
        <circle cx="14" cy="14" r="6.400" fill="#f4f4f4" />
        <circle cx="14" cy="14" r="5" fill="#4688f1" />
      </Svg>
    </TaskApp>
    <TaskApp label="Steam">
      <Svg size="w-7 h-7" box="0 0 28 28">
        <circle cx="14" cy="14" r="13.800" fill="url(#steam)" />
        <path d="m.5 14 7 3 6-6 5.500 5-7 5.500q-1 4-5 3-3.500-1-3.500-4L.8 18z" fill="#fff" />
        <circle cx="18.500" cy="10.500" r="5.700" fill="#fff" />
        <circle cx="18.500" cy="10.500" r="3.700" fill="#fff" stroke="#1d2b52" strokeWidth="1.300" />
        <circle cx="8" cy="20.500" r="2.600" fill="none" stroke="#1a5e90" strokeWidth="1.200" />
      </Svg>
    </TaskApp>
    <TaskApp label="Origin" running>
      <Svg size="w-[30px] h-[30px]" box="0 0 30 30">
        <path
          d="M14.500 0q-1.200 2-1 4.500Q22 3.500 25 10q3.500 8-3 15.500-3 3-6.500 4.500 1.500-2 1.200-4.500Q8.500 26 5.300 20q-4-8 2.400-15.200Q11 1.500 14.500 0z"
          fill="url(#origin)"
        />
        <circle cx="15" cy="15" r="4.200" fill="#0a0a0a" />
      </Svg>
    </TaskApp>
    <TaskApp label="Ubisoft Connect">
      <Svg size="w-[30px] h-[30px]" box="0 0 30 30">
        <circle cx="15" cy="15" r="14.800" fill="#0a78ff" />
        <path
          d="M5.500 14Q7 5 15.500 5q9.500.5 10 10-.5 9.500-10 10.500-7-.5-9-7 0-8 8-9 7 .5 7.500 7-.5 5.500-6.500 6-4.500-.5-4.500-4.500.5-3.500 4-3.500 2.500.5 2.500 3"
          fill="none"
          stroke="#fff"
          strokeWidth="2.100"
        />
      </Svg>
    </TaskApp>
    <TaskApp label="Control Panel" running>
      <Svg size="w-7 h-7" box="0 0 28 28">
        <path d="M.8 5.500h26.400v17.500H.8z" fill="#8ad2f4" stroke="#2b94cf" strokeWidth="1.300" />
        <circle cx="9" cy="12.500" r="4.800" fill="#4ba7dd" stroke="#e5f5fc" strokeWidth="0.800" />
        <path d="M9 12.500V7.700a4.800 4.800 0 0 1 4.800 4.800z" fill="#f5b03c" />
        <path d="M18 8.500h7M18 12.500h7M18 16.500h7M18 8v9" stroke="#2f7fb5" strokeWidth="1.200" />
        <path d="M4 20h9" stroke="#e8982f" strokeWidth="1.600" />
        <path d="M15 20h8" stroke="#1b6fa9" strokeWidth="1.300" />
      </Svg>
    </TaskApp>
    <TaskApp label="Paint" running>
      <Svg size="w-[30px] h-[30px]" box="0 0 30 30">
        <path d="M.8 18Q1.500 8 12 5.500q11-1.500 14 7 2 9-6 13.500-4 2-5.500-.5t-4 .8q-3 1-3.500-2t-4-2.300Q.6 21.500.8 18z" fill="#cfe6f4" stroke="#8eb6cf" strokeWidth="0.700" />
        <circle cx="5.500" cy="15.500" r="2.300" fill="#e4483d" />
        <circle cx="10" cy="10.500" r="2.400" fill="#63bd46" />
        <circle cx="16.500" cy="8.500" r="2.700" fill="#f6b21c" />
        <circle cx="12.500" cy="17" r="2" fill="#14181b" />
        <path d="M15 28.500 24.500 7l1.500.8z" fill="#e88f33" stroke="#c26f1c" strokeWidth="1.200" />
        <path d="M22.500 1q4 1.500 6.500 3-1.500 1-2.500 4.500L23.500 7q.5-3-1-6z" fill="#d1a166" />
      </Svg>
    </TaskApp>
    <TaskApp label="Computer Management" active>
      <Svg size="w-[30px] h-[30px]" box="0 0 30 30">
        <path d="M5 6h6v14H5z" fill="#d9dcdf" stroke="#8b9096" strokeWidth="0.700" />
        <path d="M10.500 1 28 3l-2 15.500-15-2.500z" fill="#dfe2e6" stroke="#9a9fa6" strokeWidth="0.700" />
        <path d="m12.500 2.800 13.500 1.600-1.600 11.800-12-2z" fill="url(#navy)" />
        <path d="M1 17.500 9 15l14 2.500v8L14 29 1 25.500z" fill="#9fb0b8" stroke="#68757c" strokeWidth="0.700" />
        <path d="m1 17.500 13 3.500 9-3.500L9 15z" fill="#d0d9de" />
        <path d="M9 17v-2.500l7-.5v4" fill="none" stroke="#1f2426" strokeWidth="1.500" />
        <path d="M14 21v8M1 21l13 3.500 9-3" fill="none" stroke="#6f7d84" strokeWidth="0.800" />
      </Svg>
    </TaskApp>

    <div className="grow flex items-center justify-end">
      <button type="button" aria-label="People" className="w-8 flex justify-center">
        <Svg>
          <g fill="none" stroke="#fff" strokeWidth="1.500">
            <circle cx="13.500" cy="4.500" r="3.500" />
            <path d="M11 8.500q5.500-2 7.700 3.500" />
            <circle cx="6.500" cy="10.500" r="3.500" />
            <path d="M1 19.500q.5-5.500 5.500-5.500t5.500 5.500" />
          </g>
        </Svg>
      </button>
      <button type="button" aria-label="Show hidden icons" className="w-5 ml-5 flex justify-center">
        <Svg size="w-4 h-4" box="0 0 16 16">
          <path d="m.5 12 7.500-7.500 7.500 7.500" fill="none" stroke="#fff" strokeWidth="1.400" />
        </Svg>
      </button>
      <button type="button" aria-label="Network" className="ml-2.5">
        <Svg>
          <path d="M5 2.500h14.500v11H2.500V7M11 13.500V17M7 17.500h7M2.500 14v4" fill="none" stroke="#fff" />
          <path d="M.5 2.500h4V7h-4zM2.500 4v3" fill="none" stroke="#fff" />
        </Svg>
      </button>
      <button type="button" className="ml-3">ENG</button>
      <button type="button" className="w-[84px] ml-2 text-center leading-[23px]">
        1:28 PM
        <br />
        5/16/2020
      </button>
      <button type="button" aria-label="Notifications" className="w-[50px] flex justify-center">
        <Svg>
          <path d="M.5.500h19v16h-6.500l-3 3-3-3H.5z" fill="none" stroke="#fff" />
        </Svg>
      </button>
      <span className="w-1.5 h-full ml-2.5 border-l border-[#777]" />
    </div>
  </footer>
);

const App: React.FC = () => (
  <div className="min-h-screen flex flex-col bg-black text-white text-sm font-['Open_Sans','Noto_Sans',sans-serif]">
    <Gradients />
    <main className="relative grow overflow-hidden">
      <Desktop />
      <ManagementWindow />
    </main>
    <Taskbar />
  </div>
);

export default App;
